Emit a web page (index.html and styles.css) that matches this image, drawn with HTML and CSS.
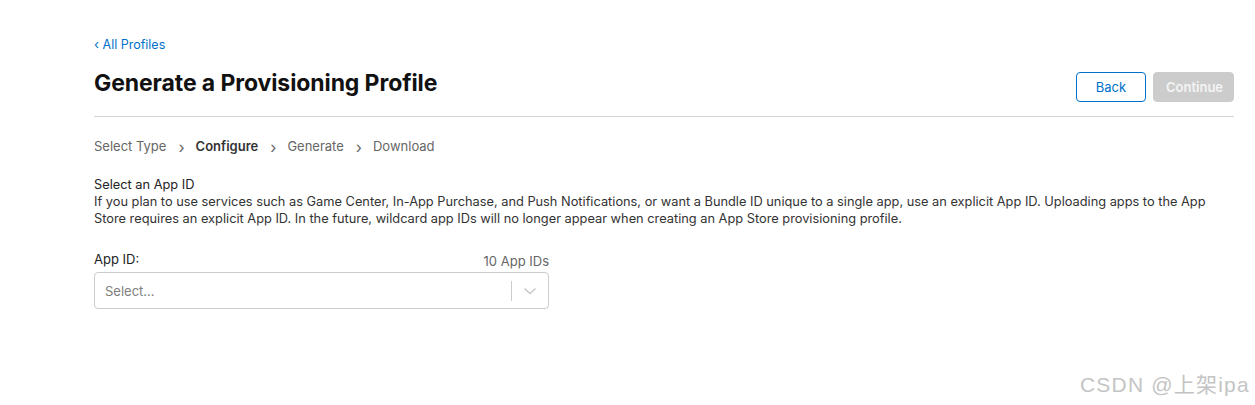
FILE: index.html
```html
<!DOCTYPE html>
<html>
<head>
<meta charset="utf-8">
<link rel="stylesheet" href="styles.css">
</head>
<body>
<div class="page">
  <a class="back-link" href="#"><span class="chev">‹</span> All Profiles</a>
  <div class="header">
    <h1 class="title">Generate a Provisioning Profile</h1>
    <div class="actions">
      <button class="btn btn-back">Back</button>
      <button class="btn btn-continue">Continue</button>
    </div>
  </div>
  <div class="steps">
    <span class="step">Select Type</span>
    <span class="sep">›</span>
    <span class="step current">Configure</span>
    <span class="sep">›</span>
    <span class="step">Generate</span>
    <span class="sep">›</span>
    <span class="step">Download</span>
  </div>
  <div class="section">
    <div class="section-title">Select an App ID</div>
    <p class="desc">If you plan to use services such as Game Center, In-App Purchase, and Push Notifications, or want a Bundle ID unique to a single app, use an explicit App ID. Uploading apps to the App Store requires an explicit App ID. In the future, wildcard app IDs will no longer appear when creating an App Store provisioning profile.</p>
  </div>
  <div class="field">
    <div class="field-head">
      <span class="label">App ID:</span>
      <span class="count">10 App IDs</span>
    </div>
    <div class="select">
      <span class="placeholder">Select...</span>
      <span class="indicator">
        <span class="divider"></span>
        <svg width="16" height="14" viewBox="0 0 16 14"><path d="M2.5 4.5 L8 9.5 L13.5 4.5" fill="none" stroke="#c7c7c7" stroke-width="1.4"/></svg>
      </span>
    </div>
  </div>
</div>
<div class="watermark">CSDN @上架ipa</div>
</body>
</html>
```
FILE: styles.css
```css
html, body { margin: 0; padding: 0; background: #fff; }
body { font-family: Inter, "Noto Sans", sans-serif; color: #333; width: 1255px; height: 405px; overflow: hidden; position: relative; }
.page { padding: 36px 21px 0 94px; }
.back-link { display: block; font-size: 12.5px; color: #0070c9; text-decoration: none; line-height: 17px; height: 17px; }
.back-link .chev { font-size: 13px; }
.header { display: flex; justify-content: space-between; align-items: flex-start; border-bottom: 1px solid #d6d6d6; padding-bottom: 13px; margin-top: 15px; }
.title { margin: 0; font-size: 23px; font-weight: 700; color: #111; line-height: 30px; letter-spacing: -0.1px; }
.actions { display: flex; gap: 7px; margin-top: 4px; padding-bottom: 1px; }
.btn { font-family: Inter, "Noto Sans", sans-serif; font-size: 13px; height: 30px; border-radius: 4px; padding: 0 12px; line-height: 28px; }
.btn-back { width: 70px; background: #fff; color: #0070c9; border: 1px solid #0070c9; }
.btn-continue { width: 81px; background: #ccc; color: #f4f4f4; border: 1px solid #ccc; font-weight: 600; }
.steps { display: flex; align-items: center; margin-top: 20px; font-size: 13px; color: #666; height: 18px; }
.step.current { color: #333; font-weight: 600; }
.sep { font-size: 16px; color: #666; margin: 0 11px 0 12px; position: relative; top: 1px; }
.section { margin-top: 21px; }
.section-title { font-size: 12.8px; color: #222; line-height: 17px; }
.desc { margin: 0; font-size: 12.8px; line-height: 17px; color: #333; }
.field { width: 455px; margin-top: 21px; }
.field-head { display: flex; justify-content: space-between; align-items: flex-end; height: 19px; }
.label { font-size: 13px; color: #222; }
.count { font-size: 13px; color: #666; position: relative; top: 2px; }
.select { margin-top: 5px; height: 37px; border: 1px solid #ccc; border-radius: 4px; display: flex; align-items: center; justify-content: space-between; box-sizing: border-box; padding-left: 10px; }
.placeholder { font-size: 13px; color: #808080; }
.indicator { display: flex; align-items: center; height: 100%; }
.divider { width: 1px; height: 20px; background: #ccc; margin-right: 10px; }
.indicator svg { margin-right: 10px; }
.watermark { position: absolute; left: 1080px; top: 368px; font-family: "Liberation Sans", "Noto Sans CJK SC", sans-serif; font-size: 21px; letter-spacing: 1.2px; color: #c4c4c4; text-shadow: 0 0 1px #fff; }
```
